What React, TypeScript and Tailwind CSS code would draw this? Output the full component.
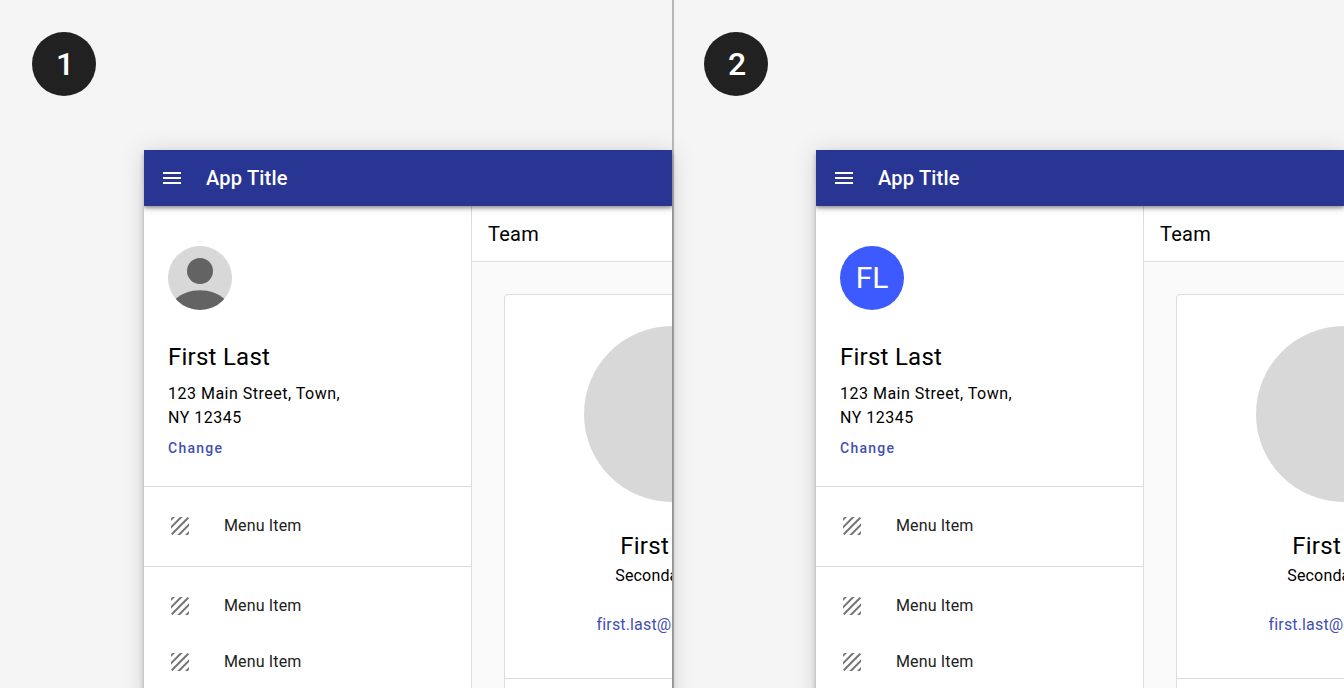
import type { ReactNode } from "react";
import { MdMenu, MdTexture } from "react-icons/md";

function MenuItem() {
  return (
    <li className="flex h-14 items-center gap-8 px-6">
      <MdTexture className="size-6 text-[#757575]" />
      <span className="text-[16px] leading-6 tracking-[0.15px] text-[#212121]">Menu Item</span>
    </li>
  );
}

function PersonAvatar() {
  return (
    <svg viewBox="0 0 64 64" className="size-16 rounded-full bg-[#d8d8d8]">
      <circle cx="32" cy="25" r="13" fill="#636363" />
      <path d="M7 53.500C14 47 22.8 44.300 32 44.300S50 47 57 53.500V64H7Z" fill="#636363" />
    </svg>
  );
}

function InitialsAvatar() {
  return (
    <div className="flex size-16 items-center justify-center rounded-full bg-[#3d5afe] text-[30px] leading-none text-white">
      FL
    </div>
  );
}

function Sidebar({ avatar }: { avatar: ReactNode }) {
  return (
    <aside className="w-[328px] shrink-0 border-r border-[#dcdcdc] bg-white">
      <div className="h-[281px] border-b border-[#dcdcdc] px-6 pt-10">
        {avatar}
        <h2 className="mt-[31px] text-[24px] leading-8 tracking-[0.25px] text-black">First Last</h2>
        <p className="mt-[9px] w-[180px] text-[16px] leading-6 tracking-[0.5px] text-black">
          123 Main Street, Town, NY 12345
        </p>
        <a className="mt-2 block text-[14px] font-medium leading-5 tracking-[1.25px] text-[#3f51b5]">Change</a>
      </div>
      <ul className="flex h-20 flex-col border-b border-[#dcdcdc] pt-[11px]">
        <MenuItem />
      </ul>
      <ul className="pt-[11px]">
        <MenuItem />
        <MenuItem />
      </ul>
    </aside>
  );
}

function TeamCard() {
  return (
    <div className="ml-8 mt-8 h-[460px] w-[336px] shrink-0 rounded border border-[#dcdcdc] bg-white">
      <div className="flex h-[384px] flex-col items-center border-b border-[#dcdcdc] pt-[31px]">
        <div className="size-44 rounded-full bg-[#d8d8d8]" />
        <h3 className="mt-7 whitespace-nowrap pr-px text-[24px] leading-8 tracking-[0.3px] text-black">First Last</h3>
        <p className="mt-[2px] whitespace-nowrap pr-[2px] text-[16px] leading-6 tracking-[0.15px] text-black">Secondary Text</p>
        <a className="mt-[25px] whitespace-nowrap text-[16px] leading-6 tracking-[0.15px] text-[#3f51b5]">first.last@email.com</a>
      </div>
    </div>
  );
}

function AppWindow({ avatar }: { avatar: ReactNode }) {
  return (
    <div className="ml-36 h-[560px] w-[528px] shadow-[0_3px_5px_rgba(0,0,0,0.28),0_2px_24px_rgba(0,0,0,0.14)]">
      <div className="flex h-full w-full flex-col overflow-hidden bg-white">
        <header className="relative z-10 flex h-14 shrink-0 items-center gap-[22px] bg-[#283593] px-4 text-white shadow-[0_2px_4px_rgba(0,0,0,0.4),0_1px_10px_rgba(0,0,0,0.12)]">
          <MdMenu className="size-6" />
          <h1 className="text-[20px] font-medium leading-6 tracking-[0.2px]">App Title</h1>
        </header>
        <div className="flex min-h-0 flex-1">
          <Sidebar avatar={avatar} />
          <main className="min-w-0 flex-1 overflow-hidden bg-[#fafafa]">
            <h2 className="h-14 border-b border-[#dcdcdc] bg-white pl-4 text-[20px] leading-[56px] tracking-[0.25px] text-black">
              Team
            </h2>
            <TeamCard />
          </main>
        </div>
      </div>
    </div>
  );
}

function Panel({ step, avatar }: { step: number; avatar: ReactNode }) {
  return (
    <section className="w-[672px] shrink-0 pt-8">
      <div className="ml-8 flex size-16 items-center justify-center rounded-full bg-[#212121] pl-[2px] text-[32px] font-medium leading-none text-white">
        {step}
      </div>
      <div className="mt-[54px]">
        <AppWindow avatar={avatar} />
      </div>
    </section>
  );
}

export default function App() {
  return (
    <div className="relative flex h-[688px] w-[1344px] overflow-hidden bg-[#f5f5f5] font-['Roboto',sans-serif]">
      <Panel step={1} avatar={<PersonAvatar />} />
      <Panel step={2} avatar={<InitialsAvatar />} />
      <div className="absolute inset-y-0 left-[672px] w-[2px] bg-black/25" />
    </div>
  );
}
